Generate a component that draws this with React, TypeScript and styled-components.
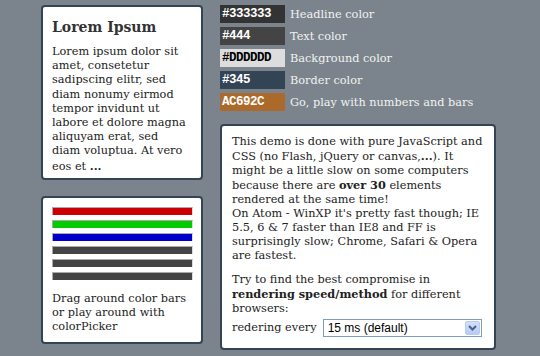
import React from "react";
import styled, { createGlobalStyle } from "styled-components";

const GlobalStyle = createGlobalStyle`
  html, body {
    margin: 0;
    padding: 0;
    background: #7b848c;
  }
  body {
    font-family: "DejaVu Serif", Georgia, serif;
    color: #444;
  }
`;

const Page = styled.div`
  display: flex;
  gap: 17px;
  padding: 5px 0 0 41px;
  width: 540px;
  height: 356px;
  box-sizing: border-box;
  overflow: hidden;
`;

const Column = styled.div<{ $width: number; $gap: number }>`
  display: flex;
  flex-direction: column;
  width: ${(p) => p.$width}px;
  gap: ${(p) => p.$gap}px;
`;

const Card = styled.div<{ $height: number }>`
  background: #fff;
  border: 2px solid #345;
  border-radius: 4px;
  box-sizing: border-box;
  height: ${(p) => p.$height}px;
  padding: 8px 6px 0 9px;
  font-size: 11.3px;
  line-height: 14.2px;
  color: #222;
  white-space: nowrap;
`;

const Title = styled.h1`
  margin: 3px 0 9px;
  font-size: 14px;
  line-height: 18px;
  font-weight: bold;
  color: #333;
`;

const Text = styled.p`
  margin: 0;
`;

const Bars = styled.div`
  display: flex;
  flex-direction: column;
  gap: 5px;
  margin: 1px 2px 12px 0;
`;

const Bar = styled.div<{ $color: string }>`
  height: 7px;
  background: ${(p) => p.$color};
  border-top: 1px solid #aaa;
  border-left: 1px solid #aaa;
  border-right: 1px solid #ddd;
`;

const Swatches = styled.div`
  display: flex;
  flex-direction: column;
  gap: 4px;
  margin-bottom: 13px;
`;

const SwatchRow = styled.div`
  display: flex;
  align-items: center;
  gap: 5px;
  height: 18px;
`;

const Chip = styled.div<{ $bg: string; $fg: string }>`
  width: 65px;
  height: 18px;
  box-sizing: border-box;
  padding: 0 2px;
  background: ${(p) => p.$bg};
  color: ${(p) => p.$fg};
  font-family: "Liberation Mono", "Courier New", monospace;
  font-weight: bold;
  font-size: 12.5px;
  letter-spacing: -0.5px;
  line-height: 18px;
`;

const SwatchLabel = styled.span`
  color: #f2f2f2;
  font-size: 11.3px;
`;

const InfoCard = styled(Card)`
  padding: 9px 8px 0 10px;
  line-height: 14px;
`;

const Gap = styled.div`
  height: 10px;
`;

const SelectRow = styled.div`
  display: flex;
  align-items: center;
  gap: 6px;
  margin-top: 3px;
`;

const SelectBox = styled.div`
  position: relative;
  width: 159px;
  height: 18px;
  box-sizing: border-box;
  border: 1px solid #7f9db9;
  background: #fff;
`;

const NativeSelect = styled.select`
  appearance: none;
  border: none;
  outline: none;
  background: transparent;
  width: 100%;
  height: 100%;
  padding: 0 0 0 4px;
  font-family: "Liberation Sans", Arial, sans-serif;
  font-size: 12px;
  color: #000;
`;

const DropButton = styled.span`
  position: absolute;
  top: 1px;
  right: 1px;
  width: 15px;
  height: 14px;
  border-radius: 2px;
  background: linear-gradient(#d2e0fd, #b5cbf8);
  border: 1px solid #b8cbf2;
  box-sizing: border-box;
  display: flex;
  align-items: center;
  justify-content: center;
  pointer-events: none;
`;

const swatches = [
  { code: "#333333", bg: "#333333", fg: "#fff", label: "Headline color" },
  { code: "#444", bg: "#444444", fg: "#fff", label: "Text color" },
  { code: "#DDDDDD", bg: "#dddddd", fg: "#000", label: "Background color" },
  { code: "#345", bg: "#334455", fg: "#fff", label: "Border color" },
  { code: "AC692C", bg: "#ac692c", fg: "#fff", label: "Go, play with numbers and bars" },
];

const barColors = ["#cc0000", "#00cc00", "#0000cc", "#444", "#444", "#444"];

export default function App() {
  return (
    <>
      <GlobalStyle />
      <Page>
        <Column $width={162} $gap={16}>
          <Card $height={175}>
            <Title>Lorem Ipsum</Title>
            <Text>
              Lorem ipsum dolor sit
              <br />
              amet, consetetur
              <br />
              sadipscing elitr, sed
              <br />
              diam nonumy eirmod
              <br />
              tempor invidunt ut
              <br />
              labore et dolore magna
              <br />
              aliquyam erat, sed
              <br />
              diam voluptua. At vero
              <br />
              eos et <b>...</b>
            </Text>
          </Card>
          <Card $height={148}>
            <Bars>
              {barColors.map((c, i) => (
                <Bar key={i} $color={c} />
              ))}
            </Bars>
            <Text>
              Drag around color bars
              <br />
              or play around with
              <br />
              colorPicker
            </Text>
          </Card>
        </Column>
        <Column $width={276} $gap={0}>
          <Swatches>
            {swatches.map((s) => (
              <SwatchRow key={s.code}>
                <Chip $bg={s.bg} $fg={s.fg}>
                  {s.code}
                </Chip>
                <SwatchLabel>{s.label}</SwatchLabel>
              </SwatchRow>
            ))}
          </Swatches>
          <InfoCard $height={226}>
            <Text>
              This demo is done with pure JavaScript and
              <br />
              CSS (no Flash, jQuery or canvas,<b>...</b>). It
              <br />
              might be a little slow on some computers
              <br />
              because there are <b>over 30</b> elements
              <br />
              rendered at the same time!
              <br />
              On Atom - WinXP it's pretty fast though; IE
              <br />
              5.5, 6 &amp; 7 faster than IE8 and FF is
              <br />
              surprisingly slow; Chrome, Safari &amp; Opera
              <br />
              are fastest.
            </Text>
            <Gap />
            <Text>
              Try to find the best compromise in
              <br />
              <b>rendering speed/method</b> for different
              <br />
              browsers:
            </Text>
            <SelectRow>
              <span>redering every</span>
              <SelectBox>
                <NativeSelect defaultValue="15">
                  <option value="5">5 ms</option>
                  <option value="15">15 ms (default)</option>
                  <option value="30">30 ms</option>
                </NativeSelect>
                <DropButton>
                  <svg width="9" height="6" viewBox="0 0 9 6">
                    <path d="M1 1 L4.5 4.5 L8 1" fill="none" stroke="#4d6185" strokeWidth="2" />
                  </svg>
                </DropButton>
              </SelectBox>
            </SelectRow>
          </InfoCard>
        </Column>
      </Page>
    </>
  );
}
